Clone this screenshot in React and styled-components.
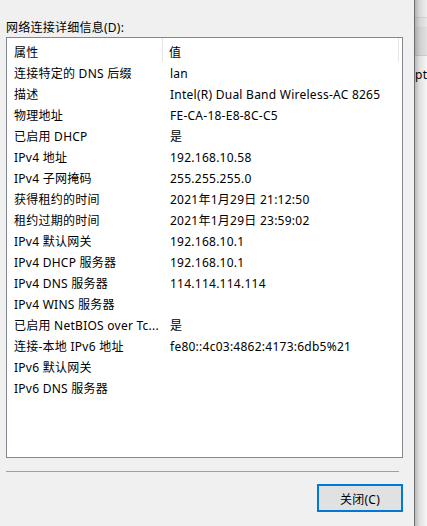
import React from "react";
import styled, { createGlobalStyle } from "styled-components";

const Global = createGlobalStyle`
  html, body { margin: 0; padding: 0; background: #f0f0f0; }
  body {
    font-family: "Noto Sans", "Noto Sans CJK SC", sans-serif;
    font-size: 12px;
    letter-spacing: 0.25px;
    color: #000;
  }
`;

const Screen = styled.div`
  display: flex;
  width: 427px;
  height: 526px;
  overflow: hidden;
`;

const Dialog = styled.div`
  width: 415px;
  flex: none;
  box-sizing: border-box;
  background: #f0f0f0;
  border-right: 1px solid #6e6e6e;
  padding: 20px 11px 0 6px;
  display: flex;
  flex-direction: column;
`;

const Label = styled.div`
  height: 16px;
  line-height: 16px;
  margin-bottom: 1px;
  white-space: nowrap;
`;

const ListBox = styled.div`
  height: 421px;
  box-sizing: border-box;
  border: 1px solid #828790;
  background: #fff;
  display: flex;
  flex-direction: column;
`;

const Header = styled.div`
  display: grid;
  grid-template-columns: 156px 236px;
  height: 24px;
`;

const HeadCell = styled.div`
  box-sizing: border-box;
  height: 24px;
  padding: 7px 0 0 ${(p) => (p.$first ? 7 : 6)}px;
  border-right: 1px solid #e5e5e5;
  line-height: 16px;
  white-space: nowrap;
`;

const Row = styled.div`
  display: grid;
  grid-template-columns: 156px 1fr;
  align-items: center;
  height: 21px;
`;

const Cell = styled.div`
  padding: 2px 0 0 7px;
  line-height: 16px;
  white-space: nowrap;
  overflow: hidden;
`;

const Separator = styled.div`
  height: 1px;
  background: #a0a0a0;
  margin: 13px 4px 12px 0;
`;

const ButtonBar = styled.div`
  display: flex;
  justify-content: flex-end;
`;

const Button = styled.button`
  width: 86px;
  height: 28px;
  box-sizing: border-box;
  border: 2px solid #0078d7;
  background: #e1e1e1;
  font-family: inherit;
  font-size: 12px;
  letter-spacing: inherit;
  color: #000;
  padding: 1px 0 0;
  margin: 0;
`;

const Strip = styled.div`
  position: relative;
  flex: 1;
  display: flex;
  flex-direction: column;
  background: #fbfbfb;
  overflow: hidden;
  &::after {
    content: "";
    position: absolute;
    inset: 0;
    pointer-events: none;
    background: linear-gradient(to right, rgba(0,0,0,0.26), rgba(0,0,0,0.1) 40%, rgba(0,0,0,0.02));
  }
`;

const StripBand = styled.div`
  height: ${(p) => p.$h}px;
  background: ${(p) => p.$bg};
  border-bottom: 1px solid ${(p) => p.$line};
  flex: none;
`;

const StripText = styled.div`
  margin-top: 11px;
  line-height: 16px;
  white-space: nowrap;
`;

const rows = [
  ["连接特定的 DNS 后缀", "lan"],
  ["描述", "Intel(R) Dual Band Wireless-AC 8265"],
  ["物理地址", "FE-CA-18-E8-8C-C5"],
  ["已启用 DHCP", "是"],
  ["IPv4 地址", "192.168.10.58"],
  ["IPv4 子网掩码", "255.255.255.0"],
  ["获得租约的时间", "2021年1月29日 21:12:50"],
  ["租约过期的时间", "2021年1月29日 23:59:02"],
  ["IPv4 默认网关", "192.168.10.1"],
  ["IPv4 DHCP 服务器", "192.168.10.1"],
  ["IPv4 DNS 服务器", "114.114.114.114"],
  ["IPv4 WINS 服务器", ""],
  ["已启用 NetBIOS over Tc...", "是"],
  ["连接-本地 IPv6 地址", "fe80::4c03:4862:4173:6db5%21"],
  ["IPv6 默认网关", ""],
  ["IPv6 DNS 服务器", ""],
];

export default function App() {
  return (
    <>
      <Global />
      <Screen>
        <Dialog>
          <Label>网络连接详细信息(D):</Label>
          <ListBox>
            <Header>
              <HeadCell $first>属性</HeadCell>
              <HeadCell>值</HeadCell>
            </Header>
            {rows.map(([k, v], i) => (
              <Row key={i}>
                <Cell>{k}</Cell>
                <Cell>{v}</Cell>
              </Row>
            ))}
          </ListBox>
          <Separator />
          <ButtonBar>
            <Button>关闭(C)</Button>
          </ButtonBar>
        </Dialog>
        <Strip>
          <StripBand $h={17} $bg="#f3f3f3" $line="#dcdcdc" />
          <StripBand $h={9} $bg="#eeeeee" $line="#e2e2e2" />
          <StripBand $h={27} $bg="#e6e6e6" $line="#d6d6d6" />
          <StripText>pte</StripText>
        </Strip>
      </Screen>
    </>
  );
}
